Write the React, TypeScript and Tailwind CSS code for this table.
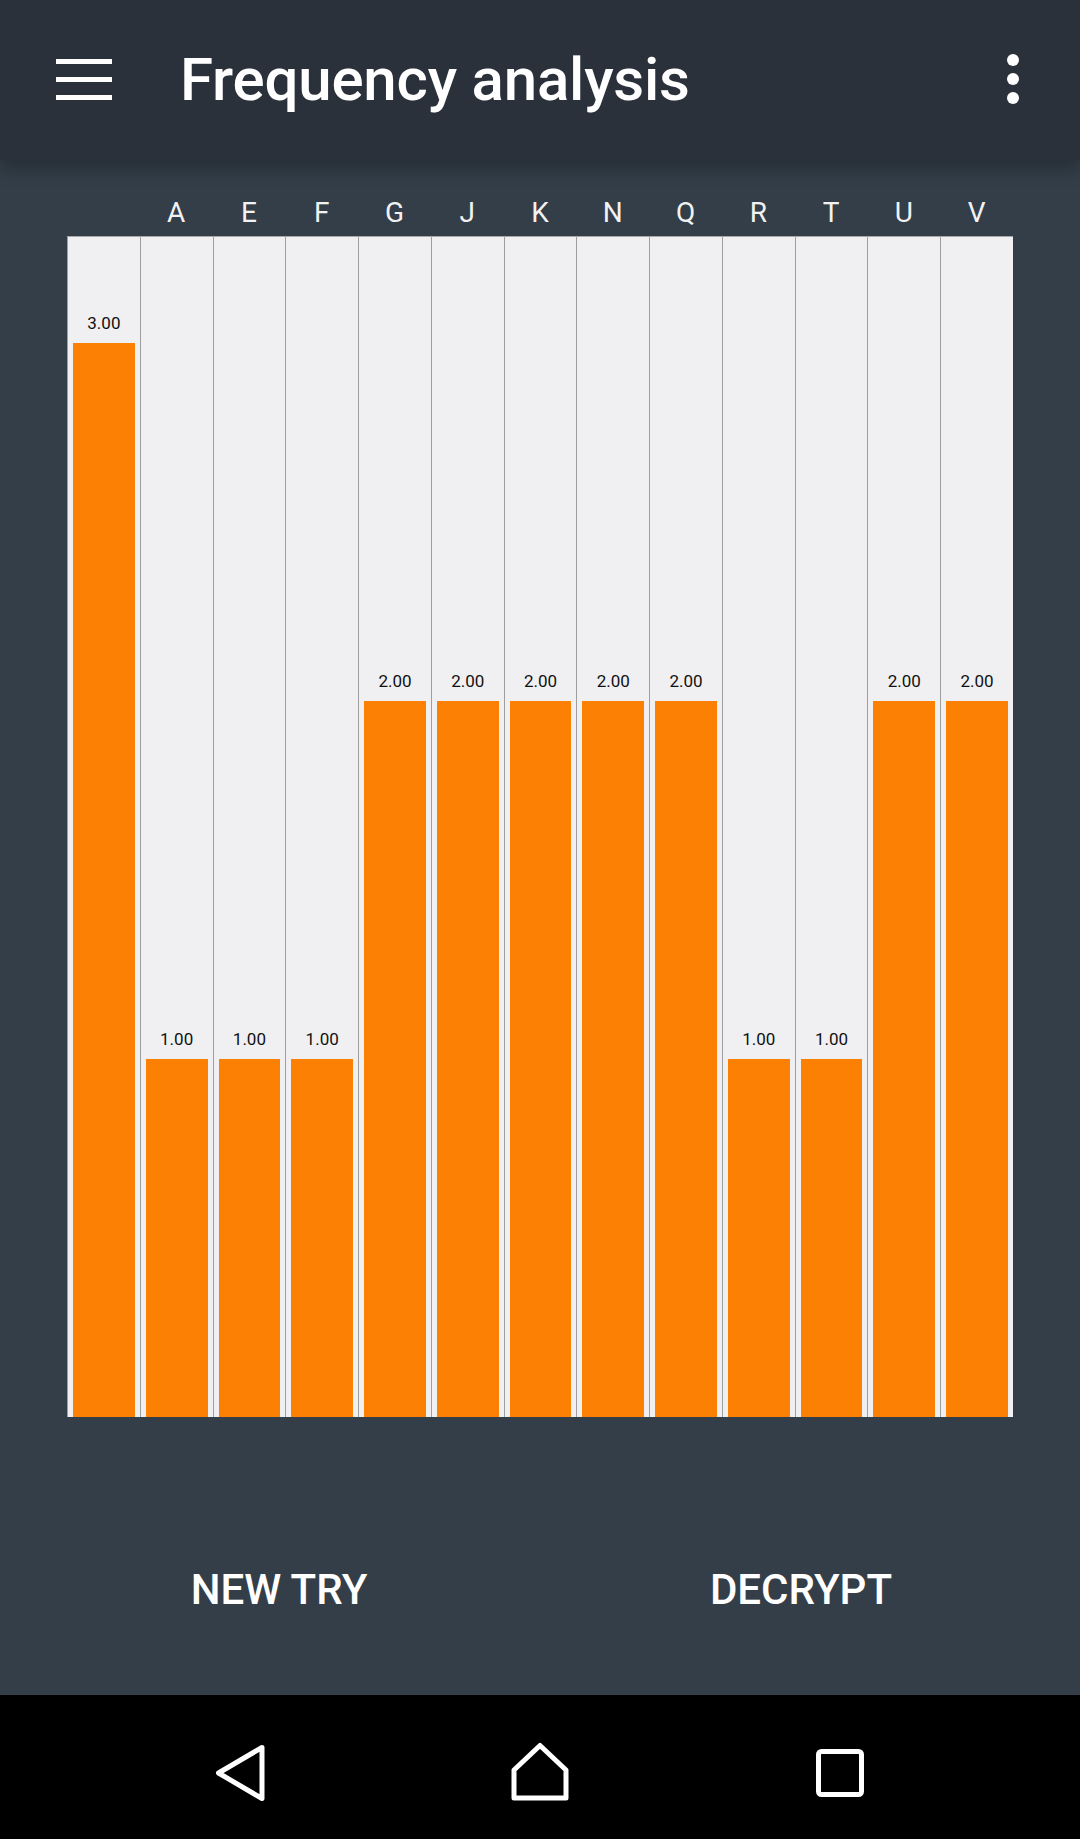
import React from "react"

const data: [string, number][] = [
  ["", 3],
  ["A", 1],
  ["E", 1],
  ["F", 1],
  ["G", 2],
  ["J", 2],
  ["K", 2],
  ["N", 2],
  ["Q", 2],
  ["R", 1],
  ["T", 1],
  ["U", 2],
  ["V", 2],
]

const CHART_H = 1181
const MAX = 3.3

export default function App() {
  return (
    <div
      className="w-[1080px] h-[1839px] flex flex-col bg-[#333e48] overflow-hidden"
      style={{ fontFamily: "Roboto, 'Noto Sans', sans-serif" }}
    >
      {/* app bar */}
      <header className="relative z-10 h-[160px] shrink-0 flex items-center bg-[#2b313a] shadow-[0_8px_18px_rgba(0,0,0,0.28)]">
        <div className="ml-[56px] flex flex-col gap-[13px] -mt-[2px]">
          <div className="h-[5px] w-[56px] bg-white" />
          <div className="h-[5px] w-[56px] bg-white" />
          <div className="h-[5px] w-[56px] bg-white" />
        </div>
        <h1 className="ml-[68px] text-[60px] font-medium text-white leading-none tracking-[-0.2px]">
          Frequency analysis
        </h1>
        <div className="ml-auto mr-[61px] flex flex-col items-center gap-[7px] -mt-[2px]">
          <div className="h-[12px] w-[12px] rounded-full bg-white" />
          <div className="h-[12px] w-[12px] rounded-full bg-white" />
          <div className="h-[12px] w-[12px] rounded-full bg-white" />
        </div>
      </header>

      {/* chart */}
      <main className="px-[67px] pt-[39px]">
        <div className="grid grid-cols-13 h-[28px] mb-[9px]">
          {data.map(([letter], i) => (
            <div key={i} className="text-center text-[28px] leading-[28px] text-[#f2f2f2]">
              {letter}
            </div>
          ))}
        </div>
        <div className="grid grid-cols-13 h-[1181px] bg-[#f0f0f2] border-t border-[#a8a8a8]">
          {data.map(([, value], i) => (
            <div key={i} className="flex flex-col justify-end items-stretch border-l border-[#9e9e9e] px-[5px]">
              <div className="text-center text-[17px] leading-[20px] text-[#111] mb-[10px]">
                {value.toFixed(2)}
              </div>
              <div className="bg-[#fb8003]" style={{ height: (value / MAX) * CHART_H }} />
            </div>
          ))}
        </div>
      </main>

      {/* buttons */}
      <div className="flex-1 flex items-start px-[18px] pt-[150px]">
        <button className="flex-1 h-[46px] leading-[46px] text-center text-[42px] font-medium text-white">
          NEW TRY
        </button>
        <button className="flex-1 h-[46px] leading-[46px] text-center text-[42px] font-medium text-white">
          DECRYPT
        </button>
      </div>

      {/* nav bar */}
      <nav className="h-[144px] shrink-0 bg-black flex items-start justify-center gap-[240px] pt-[46px]">
        <svg width="60" height="60" viewBox="0 0 60 60" fill="none" stroke="white" strokeWidth="5" strokeLinejoin="round">
          <path d="M52 6.5 L8.5 32 L52 57.5 Z" />
        </svg>
        <svg width="60" height="60" viewBox="0 0 60 60" fill="none" stroke="white" strokeWidth="5" strokeLinejoin="round">
          <path d="M30 4.5 L56 29 V57 H4 V29 Z" />
        </svg>
        <svg width="60" height="60" viewBox="0 0 60 60" fill="none" stroke="white" strokeWidth="5" strokeLinejoin="round">
          <rect x="8.5" y="10.5" width="43" height="43" rx="3" />
        </svg>
      </nav>
    </div>
  )
}
